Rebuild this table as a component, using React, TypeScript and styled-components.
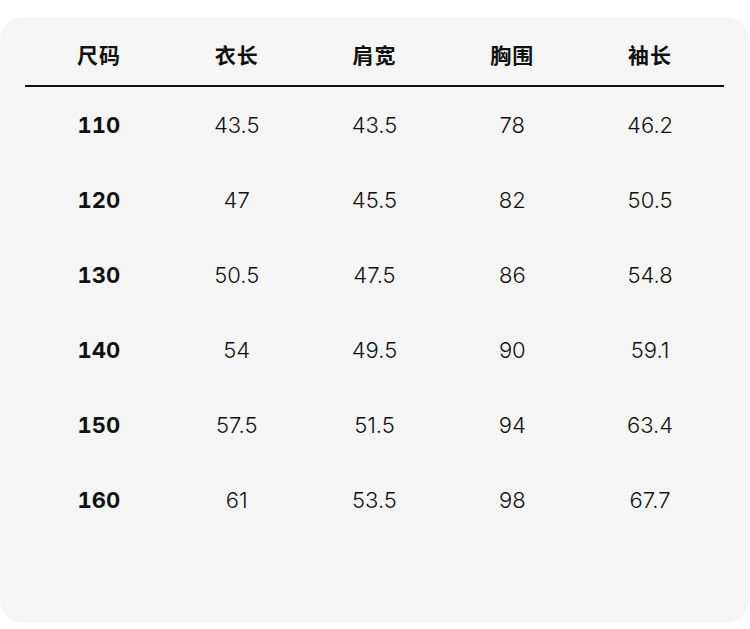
import styled, { createGlobalStyle } from "styled-components"

const GlobalStyle = createGlobalStyle`
	html, body {
		margin: 0;
		padding: 0;
		background: #ffffff;
	}
	body {
		font-family: Inter, "Noto Sans CJK SC", sans-serif;
		color: #111111;
	}
`

const SCard = styled.div`
	margin-top: 17px;
	width: 749px;
	height: 606px;
	box-sizing: border-box;
	padding: 0 25px;
	background-color: #f5f5f5;
	border-radius: 24px;
`

const SHeader = styled.div`
	display: grid;
	grid-template-columns: repeat(5, 1fr);
	align-items: center;
	height: 62px;
	padding: 6px 5px 0;
	border-bottom: 2px solid #111111;
`

const SHeadCell = styled.div`
	text-align: center;
	font-family: "Noto Sans CJK SC", sans-serif;
	font-size: 21px;
	font-weight: 700;
	letter-spacing: 1px;
`

const SBody = styled.div`
	padding: 0 5px;
`

const SRow = styled.div`
	display: grid;
	grid-template-columns: repeat(5, 1fr);
	align-items: center;
	height: 75px;
`

const SCell = styled.div<{ $bold?: boolean }>`
	text-align: center;
	font-size: 22px;
	font-weight: ${p => (p.$bold ? 700 : 300)};
	font-variant-numeric: ${p => (p.$bold ? "tabular-nums" : "normal")};
	color: #111111;
`

const headers = ["尺码", "衣长", "肩宽", "胸围", "袖长"]

const rows = [
	["110", "43.5", "43.5", "78", "46.2"],
	["120", "47", "45.5", "82", "50.5"],
	["130", "50.5", "47.5", "86", "54.8"],
	["140", "54", "49.5", "90", "59.1"],
	["150", "57.5", "51.5", "94", "63.4"],
	["160", "61", "53.5", "98", "67.7"]
]

export default function App() {
	return (
		<>
			<GlobalStyle />
			<SCard>
				<SHeader>
					{headers.map(h => (
						<SHeadCell key={h}>{h}</SHeadCell>
					))}
				</SHeader>
				<SBody>
					{rows.map(row => (
						<SRow key={row[0]}>
							{row.map((v, i) => (
								<SCell key={i} $bold={i === 0}>
									{v}
								</SCell>
							))}
						</SRow>
					))}
				</SBody>
			</SCard>
		</>
	)
}
